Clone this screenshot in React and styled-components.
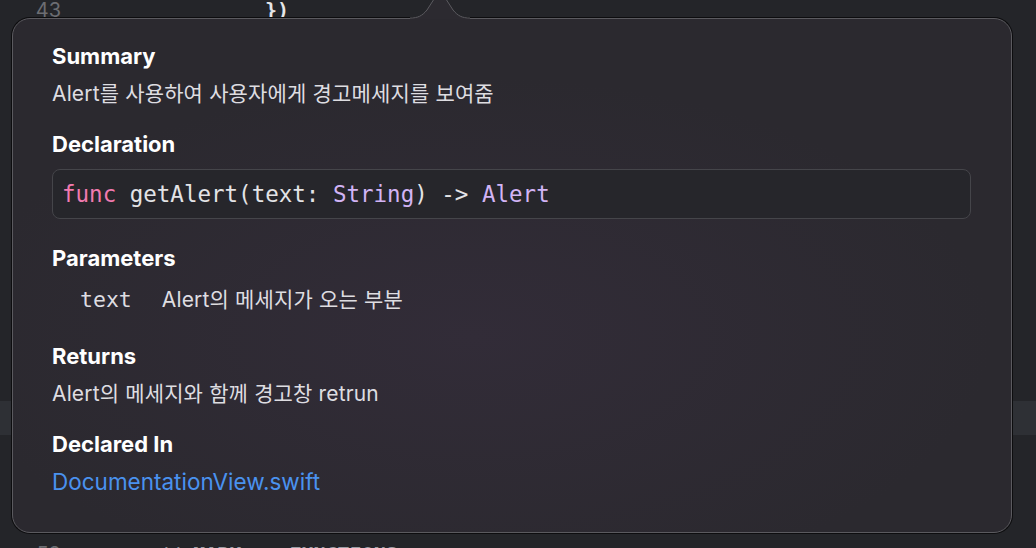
import React from 'react';
import styled, { createGlobalStyle } from 'styled-components';

const GlobalStyle = createGlobalStyle`
  html, body {
    margin: 0;
    padding: 0;
    background: #242529;
    overflow: hidden;
  }
  * {
    box-sizing: border-box;
  }
`;

const lines = [
  { no: 43, indent: 15, text: '})' },
  { no: 44 },
  { no: 45 },
  { no: 46 },
  { no: 47 },
  { no: 48 },
  { no: 49 },
  { no: 50 },
  { no: 51 },
  { no: 52 },
  { no: 53 },
  { no: 54 },
  { no: 55, current: true },
  { no: 56 },
  { no: 57 },
  { no: 58 },
  { no: 59, indent: 6, comment: '// ', mark: 'MARK: - FUNCTIONS' },
];

const App = () => {
  return (
    <Screen>
      <GlobalStyle />
      <Editor>
        {lines.map((line) => (
          <Line key={line.no} $current={line.current}>
            <Gutter>{line.no}</Gutter>
            <Code $indent={line.indent || 0}>
              {line.text}
              {line.comment && <Comment>{line.comment}</Comment>}
              {line.mark && <Mark>{line.mark}</Mark>}
            </Code>
          </Line>
        ))}
      </Editor>

      <Popover>
        <Arrow width='60' height='26' viewBox='0 0 60 26'>
          <path
            d='M0 27 L0 26 C8 26 12 24 17 18 L26 4 Q30 -1 34 4 L43 18 C48 24 52 26 60 26 L60 27 Z'
            fill='#2c2a30'
          />
          <path
            d='M0 26 C8 26 12 24 17 18 L26 4 Q30 -1 34 4 L43 18 C48 24 52 26 60 26'
            fill='none'
            stroke='#5b5a5f'
            strokeWidth='1'
          />
        </Arrow>

        <Section>
          <Heading>Summary</Heading>
          <Body>Alert를 사용하여 사용자에게 경고메세지를 보여줌</Body>
        </Section>

        <Section $top={22}>
          <Heading>Declaration</Heading>
          <CodeBox>
            <Keyword>func</Keyword> getAlert(text: <TypeName>String</TypeName>)
            {' -> '}
            <TypeName>Alert</TypeName>
          </CodeBox>
        </Section>

        <Section $top={25}>
          <Heading>Parameters</Heading>
          <ParamRow>
            <ParamName>text</ParamName>
            <Body>Alert의 메세지가 오는 부분</Body>
          </ParamRow>
        </Section>

        <Section $top={28}>
          <Heading>Returns</Heading>
          <Body>Alert의 메세지와 함께 경고창 retrun</Body>
        </Section>

        <Section $top={22}>
          <Heading>Declared In</Heading>
          <Link>DocumentationView.swift</Link>
        </Section>
      </Popover>
    </Screen>
  );
};

const Screen = styled.div`
  position: relative;
  width: 1036px;
  height: 548px;
  overflow: hidden;
  background: #242529;
`;

const Editor = styled.div`
  display: flex;
  flex-direction: column;
  margin-top: -7px;
`;

const Line = styled.div`
  display: flex;
  align-items: center;
  height: 34px;
  background: ${(p) => (p.$current ? '#2e3035' : 'transparent')};
`;

const Gutter = styled.div`
  width: 61px;
  text-align: right;
  font-family: 'Inter', 'Liberation Sans', sans-serif;
  font-size: 20px;
  color: #6c6d72;
`;

const Code = styled.div`
  padding-left: ${(p) => 24 + p.$indent * 12}px;
  font-family: 'DejaVu Sans Mono', 'Liberation Mono', monospace;
  font-size: 20px;
  color: #e6e6e8;
  font-weight: 600;
  white-space: pre;
`;

const Comment = styled.span`
  color: #8f9199;
  font-weight: 400;
`;

const Mark = styled.span`
  color: #9a9ca4;
  font-weight: 700;
`;

const Popover = styled.div`
  position: absolute;
  left: 12px;
  top: 18px;
  width: 1000px;
  height: 515px;
  padding: 23px 40px 0 39px;
  border: 1px solid #5b5a5f;
  border-radius: 18px;
  box-shadow: 0 0 0 1px #0d0d0f;
  background: radial-gradient(
      ellipse 520px 260px at 46% 62%,
      #322c38 0%,
      rgba(50, 44, 56, 0) 100%
    ),
    #2b292f;
  display: flex;
  flex-direction: column;
`;

const Arrow = styled.svg`
  position: absolute;
  left: 397px;
  top: -27px;
  overflow: visible;
`;

const Section = styled.section`
  display: flex;
  flex-direction: column;
  gap: 10px;
  margin-top: ${(p) => p.$top || 0}px;
`;

const Heading = styled.h2`
  margin: 0;
  height: 28px;
  line-height: 28px;
  font-family: 'Inter', 'Liberation Sans', sans-serif;
  font-size: 22px;
  font-weight: 700;
  color: #ffffff;
`;

const Body = styled.p`
  margin: 0;
  height: 28px;
  line-height: 28px;
  font-family: 'Inter', 'Noto Sans CJK KR', sans-serif;
  font-size: 21px;
  color: #dedde1;
  white-space: nowrap;
  letter-spacing: 0.15px;
`;

const CodeBox = styled.div`
  margin-top: 1px;
  height: 50px;
  display: flex;
  align-items: center;
  padding: 0 9px;
  border: 1px solid #45454a;
  border-radius: 8px;
  background: #26262b;
  font-family: 'DejaVu Sans Mono', 'Liberation Mono', monospace;
  font-size: 22.5px;
  color: #e3e3e6;
  white-space: pre;
`;

const Keyword = styled.span`
  color: #f17ab0;
`;

const TypeName = styled.span`
  color: #d2b4f5;
`;

const ParamRow = styled.div`
  display: flex;
  align-items: center;
  gap: 30px;
  padding-left: 28px;
  margin-top: 4px;
`;

const ParamName = styled.span`
  font-family: 'DejaVu Sans Mono', 'Liberation Mono', monospace;
  font-size: 21.5px;
  color: #dedde1;
  line-height: 28px;
`;

const Link = styled.a`
  height: 28px;
  line-height: 28px;
  font-family: 'Inter', 'Liberation Sans', sans-serif;
  font-size: 22.5px;
  color: #4a92ef;
  text-decoration: none;
  cursor: pointer;
`;

export default App;
